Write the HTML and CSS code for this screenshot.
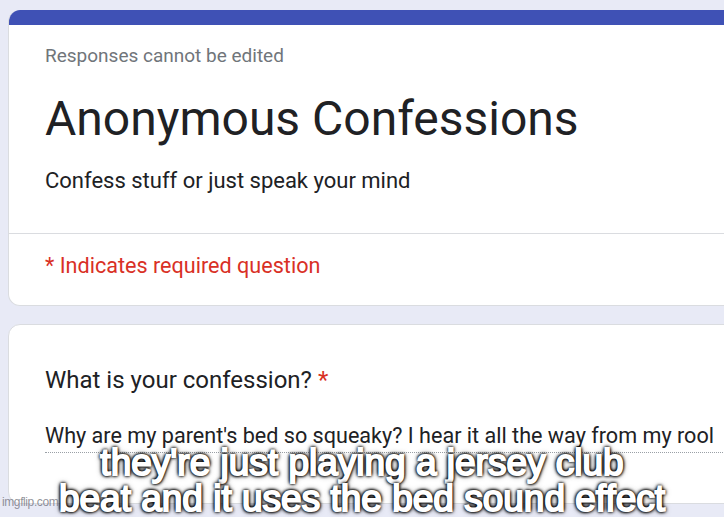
FILE: index.html
```html
<!DOCTYPE html>
<html lang="en">
<head>
    <meta charset="UTF-8">
    <meta name="viewport" content="width=device-width, initial-scale=1.0">
    <title>Anonymous Confessions</title>
    <link rel="stylesheet" href="styles.css">
</head>
<body>
    <div class="form">
        <div class="card header-card">
            <div class="accent"></div>
            <div class="header-main">
                <div class="note">Responses cannot be edited</div>
                <h1 class="title">Anonymous Confessions</h1>
                <div class="desc">Confess stuff or just speak your mind</div>
            </div>
            <div class="required-note">* Indicates required question</div>
        </div>

        <div class="card question-card">
            <div class="question">What is your confession? <span class="star">*</span></div>
            <div class="answer">Why are my parent's bed so squeaky? I hear it all the way from my rool</div>
        </div>
    </div>

    <!-- meme caption on top of the screenshot -->
    <div class="caption">they're just playing a jersey club<br>beat and it uses the bed sound effect</div>
    <div class="watermark">imgflip.com</div>
</body>
</html>
```

FILE: styles.css
```css
body {
    margin: 0;
    height: 517px;
    overflow: hidden;
    background-color: #e8eaf6;
    font-family: Roboto, "Noto Sans", Arial, sans-serif;
    color: #202124;
    position: relative;
}
.form {
    padding: 10px 0 0 8px;
    width: 780px;
}
.card {
    background: white;
    border: 1px solid #dadce0;
    border-radius: 12px;
    overflow: hidden;
}
.header-card {
    border-top: none;
}
.accent {
    height: 15px;
    background-color: #3f51b5;
}
.header-main {
    padding: 17px 36px 37px;
    border-bottom: 1px solid #dadce0;
}
.note {
    font-size: 19px;
    line-height: 28px;
    color: #70757a;
}
.title {
    margin: 19px 0 0;
    font-size: 48px;
    line-height: 60px;
    font-weight: 400;
}
.desc {
    margin-top: 17px;
    font-size: 22px;
    line-height: 30px;
}
.required-note {
    padding: 17px 36px 24px;
    font-size: 21.6px;
    line-height: 30px;
    color: #d93025;
}
.question-card {
    margin-top: 18px;
    padding: 39px 0 50px 36px;
}
.question {
    font-size: 24px;
    line-height: 32px;
}
.star {
    color: #d93025;
}
.answer {
    margin-top: 25px;
    font-size: 21.6px;
    line-height: 30px;
    padding-bottom: 1px;
    border-bottom: 1px dotted #9aa0a6;
    white-space: nowrap;
}
.caption {
    position: absolute;
    top: 445px;
    left: 0;
    right: 0;
    text-align: center;
    white-space: nowrap;
    font-family: "Liberation Sans", Arial, sans-serif;
    font-size: 37px;
    line-height: 36px;
    color: white;
    -webkit-text-stroke: 2px white;
    text-shadow:
        1px 1px 3px #000, -1px -1px 3px #000, 1px -1px 3px #000, -1px 1px 3px #000,
        0 0 4px #000, 0 0 6px rgba(0, 0, 0, 0.8);
}
.watermark {
    position: absolute;
    left: 2px;
    top: 495px;
    font-family: "Liberation Sans", Arial, sans-serif;
    font-size: 12px;
    letter-spacing: -0.4px;
    color: rgba(110, 110, 120, 0.75);
}
```
